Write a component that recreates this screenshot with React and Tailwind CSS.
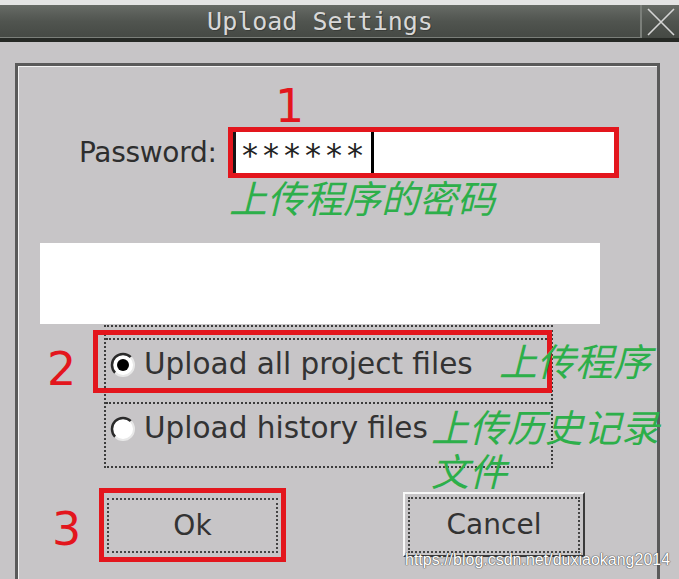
import React from "react";

const RED = "border-[#e3161d]";

function Radio({ checked }) {
  return (
    <svg width="26" height="26" viewBox="0 0 26 26" className="shrink-0">
      <circle cx="13" cy="13" r="11" fill="#ffffff" />
      <path d="M20.8 5.2 A11 11 0 0 0 5.2 20.8" fill="none" stroke="#2a2a2a" strokeWidth="2.5" />
      <path d="M5.2 20.8 A11 11 0 0 0 20.8 5.2" fill="none" stroke="#e8e8e8" strokeWidth="2" />
      {checked && <circle cx="13" cy="13" r="6" fill="#000000" />}
    </svg>
  );
}

export default function App() {
  return (
    <div className="relative w-[679px] h-[579px] overflow-hidden bg-[#c7c5c7] font-['DejaVu_Sans',sans-serif]">
      {/* top strip */}
      <div className="h-[5px] bg-[#e4e4e4]" />
      {/* title bar */}
      <div className="flex h-[37px] border-b-[4px] border-[#262925] bg-gradient-to-b from-[#676b66] via-[#50544f] to-[#454944]">
        <div className="flex flex-1 items-center justify-center border-r-[2px] border-b border-[#7b7f7a]">
          <span className="font-['DejaVu_Sans_Mono',monospace] text-[25px] leading-none text-[#d8d8d8] [text-shadow:1px_1px_0_#3a3d39]">
            Upload Settings
          </span>
        </div>
        <div className="flex w-[37px] items-center justify-center">
          <svg width="30" height="28" viewBox="0 0 30 28">
            <path d="M2 1 L28 27 M28 1 L2 27" stroke="#d4d4d4" strokeWidth="1.6" fill="none" />
          </svg>
        </div>
      </div>

      {/* body */}
      <div className="pl-[15px] pt-[21px]">
        <div className="w-[645px] h-[520px] border-l-[3px] border-t-[3px] border-r-[3px] border-[#5a5a5a]">
          <div className="h-full border-l border-t border-[#f4f4f4]">
            {/* Row A: number 1 */}
            <div className="h-[60px] pl-[256px] pt-[16px]">
              <span className="block text-[46px] leading-none text-[#e3161d]">1</span>
            </div>

            {/* Row B: password */}
            <div className="flex h-[51px] items-center">
              <div className="w-[209px] pl-[60px] text-[28px] leading-none tracking-[-0.3px] text-[#2e2e2e]">Password:</div>
              <div className={`flex w-[391px] h-[51px] border-[5px] ${RED} bg-white`}>
                <div className="flex flex-1 border-l-[3px] border-[#151515]">
                  <span className="w-[135px] pl-[6px] pt-[6px] text-[32px] leading-[35px] tracking-[5px] text-[#222]">
                    ******
                  </span>
                  <div className="w-[3px] bg-black" />
                </div>
              </div>
            </div>

            {/* Row C: green hint */}
            <div className="h-[65px] pl-[210px] font-['Noto_Sans_CJK_SC',sans-serif] text-[38px] leading-[38px] italic text-[#2daf4a]">
              上传程序的密码
            </div>

            {/* Row D: white box */}
            <div className="ml-[21px] w-[560px] h-[81px] bg-white" />

            {/* Row E: radios */}
            <div className="mt-[1px] flex">
              <div className="w-[85px] pl-[28px] pt-[21px]">
                <span className="block text-[46px] leading-none text-[#e3161d]">2</span>
              </div>
              <div className="relative w-[449px] h-[143px] border-2 border-dotted border-[#3c3c3c]">
                <div className="pt-[11px]">
                  <div className="flex h-[64px] items-center border-t-2 border-dotted border-[#3c3c3c] pb-[12px] pl-[4px]">
                    <Radio checked />
                    <span className="ml-[8px] text-[29.5px] leading-none text-[#333]">Upload all project files</span>
                  </div>
                </div>
                <div className="flex h-[64px] items-center border-t-2 border-dotted border-[#3c3c3c] pb-[12px] pl-[4px]">
                  <Radio />
                  <span className="ml-[8px] text-[29.5px] leading-none text-[#333]">Upload history files</span>
                </div>

                <div className={`absolute left-[-13px] top-[3px] w-[459px] h-[63px] border-[5px] ${RED}`} />
                <div className="absolute left-[393px] top-[14px] whitespace-nowrap font-['Noto_Sans_CJK_SC',sans-serif] text-[38px] leading-[38px] italic text-[#2daf4a]">
                  上传程序
                </div>
                <div className="absolute left-[325px] top-[77px] whitespace-nowrap font-['Noto_Sans_CJK_SC',sans-serif] text-[38px] leading-[44px] italic text-[#2daf4a]">
                  上传历史记录
                  <br />
                  文件
                </div>
              </div>
            </div>

            {/* Row F: buttons */}
            <div className="mt-[20px] flex items-start">
              <div className="w-[80px] pl-[33px] pt-[18px]">
                <span className="block text-[46px] leading-none text-[#e3161d]">3</span>
              </div>
              <div className={`w-[187px] h-[74px] border-[5px] ${RED} px-[3px] pt-[5px] pb-[4px]`}>
                <div className="flex h-full items-center justify-center border-2 border-dotted border-[#444]">
                  <span className="text-[28px] leading-none text-[#333]">Ok</span>
                </div>
              </div>
              <div className="ml-[117px] mt-[4px] w-[182px] h-[65px] border-2 border-t-[#f8f8f8] border-l-[#f8f8f8] border-r-[#3a3a3a] border-b-[#3a3a3a] px-[3px] pt-[3px] pb-[2px]">
                <div className="flex h-full items-center justify-center border-2 border-dotted border-[#444]">
                  <span className="text-[28px] leading-none text-[#333]">Cancel</span>
                </div>
              </div>
            </div>
          </div>
        </div>
      </div>

      {/* watermark */}
      <div className="absolute left-[405px] top-[551px] font-['Liberation_Sans',sans-serif] text-[16px] leading-[18px] text-white [text-shadow:0_0_1px_#555,0_0_1px_#555,0_0_1px_#555]">
        https://blog.csdn.net/duxiaokang2014
      </div>
    </div>
  );
}
